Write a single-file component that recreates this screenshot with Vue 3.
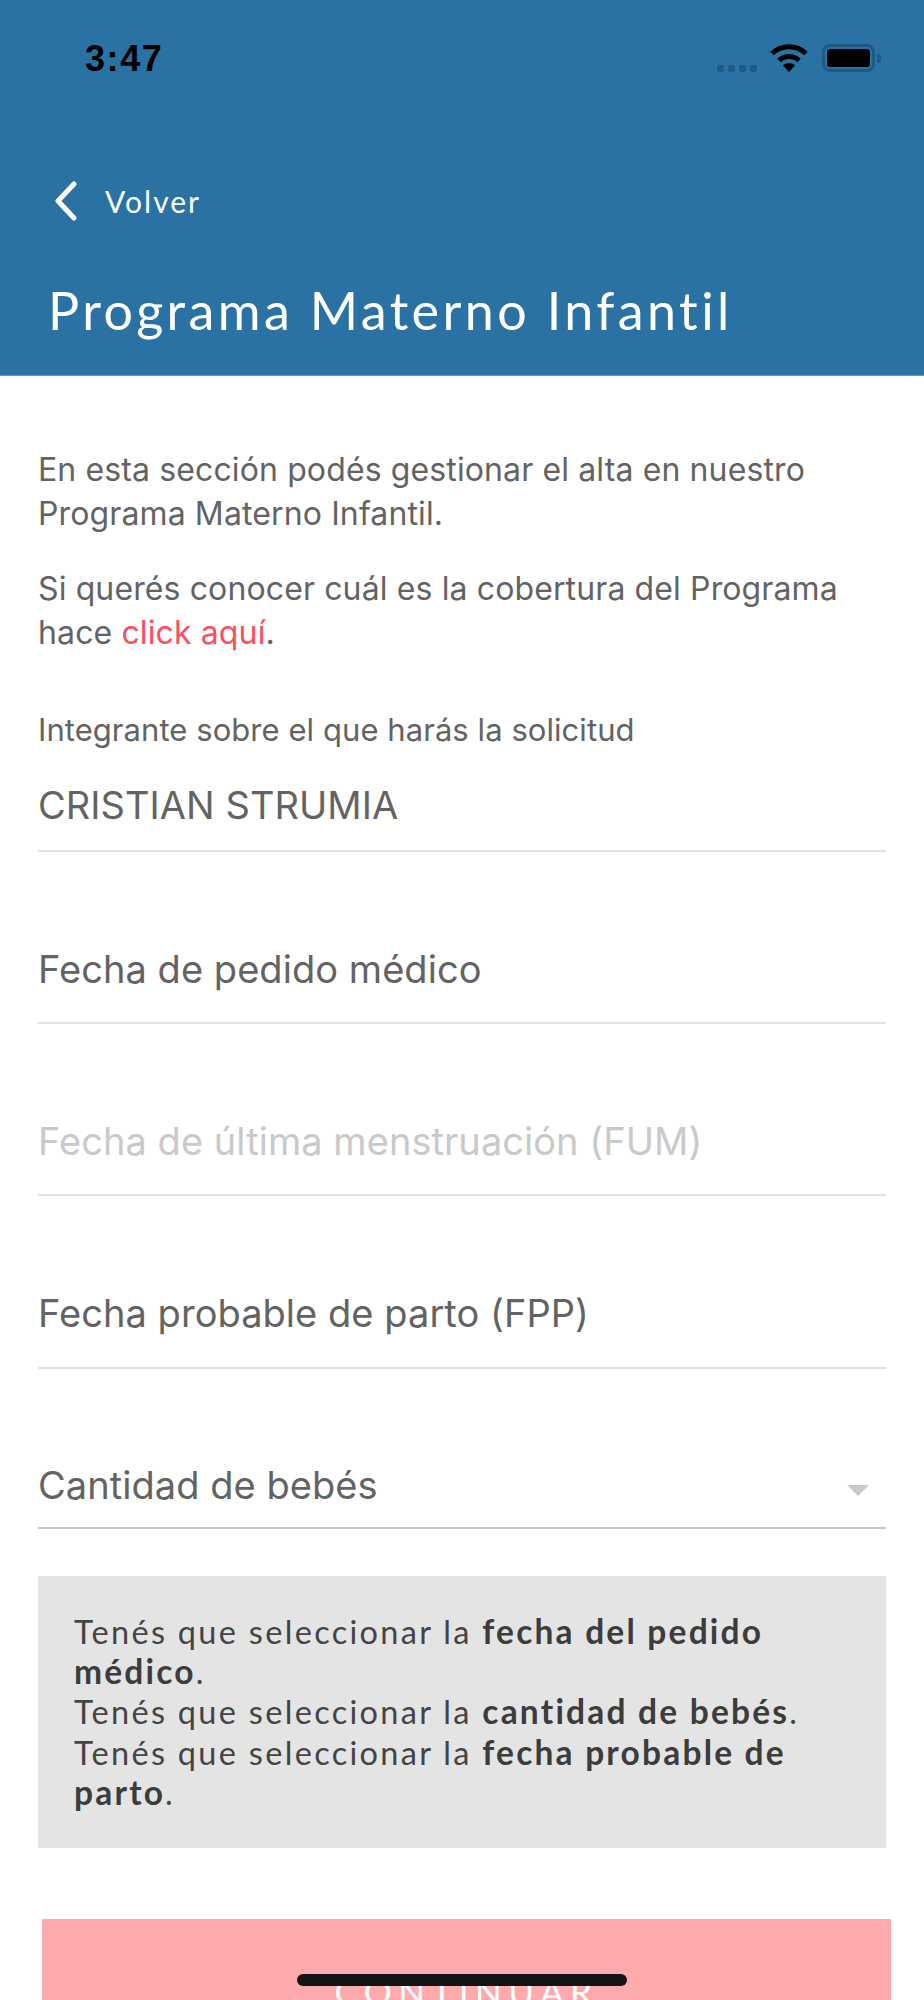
<template>
  <div class="screen">
    <header class="header">
      <div class="status">
        <span class="time">3:47</span>
        <div class="status-icons">
          <div class="signal"><i></i><i></i><i></i><i></i></div>
          <svg class="wifi" width="38" height="30" viewBox="0 0 38 30">
            <path d="M2 10.5C11.5 1.5 26.5 1.5 36 10.5" fill="none" stroke="#000" stroke-width="5" />
            <path d="M9 17.5C14.5 12.2 23.5 12.2 29 17.5" fill="none" stroke="#000" stroke-width="5" />
            <path d="M13 22.5C16.5 19.3 21.5 19.3 25 22.5L19 29Z" fill="#000" />
          </svg>
          <div class="battery"><div class="battery-fill"></div></div>
          <div class="battery-cap"></div>
        </div>
      </div>
      <div class="back">
        <svg width="26" height="40" viewBox="0 0 26 40">
          <path d="M21 3L5 20L21 37" fill="none" stroke="#fff" stroke-width="5" stroke-linecap="round" stroke-linejoin="round" />
        </svg>
        <span>Volver</span>
      </div>
      <h1 class="title">Programa Materno Infantil</h1>
    </header>

    <main class="content">
      <p class="intro">En esta sección podés gestionar el alta en nuestro<br />Programa Materno Infantil.</p>
      <p class="intro second">Si querés conocer cuál es la cobertura del Programa<br />hace <a class="link">click aquí</a>.</p>

      <label class="member-label">Integrante sobre el que harás la solicitud</label>
      <div class="field member">CRISTIAN STRUMIA</div>

      <div v-for="f in fields" :key="f.text" class="field" :class="{ disabled: f.disabled }">{{ f.text }}</div>

      <div class="field select">
        <span>Cantidad de bebés</span>
        <span class="arrow"></span>
      </div>

      <div class="notice">
        Tenés que seleccionar la <b>fecha del pedido</b><br /><b>médico</b>.<br />
        Tenés que seleccionar la <b>cantidad de bebés</b>.<br />
        Tenés que seleccionar la <b>fecha probable de</b><br /><b>parto</b>.
      </div>

      <button class="continue">CONTINUAR</button>
    </main>

    <div class="home-bar"></div>
  </div>
</template>

<script setup>
const fields = [
  { text: 'Fecha de pedido médico' },
  { text: 'Fecha de última menstruación (FUM)', disabled: true },
  { text: 'Fecha probable de parto (FPP)' },
]
</script>

<style>
html, body {
  margin: 0;
  background: #fff;
}
</style>

<style scoped>
.screen {
  position: relative;
  width: 924px;
  height: 2000px;
  overflow: hidden;
  background: #fff;
  font-family: Inter, "Liberation Sans", sans-serif;
  color: #636363;
}
.header {
  height: 376px;
  background: #2a72a3;
  border-bottom: 1px solid #5f9bc4;
  box-sizing: border-box;
  padding: 0 48px;
  color: #fff;
}
.status {
  display: flex;
  justify-content: space-between;
  align-items: center;
  height: 60px;
  padding-top: 28px;
  margin-left: 37px;
  margin-right: -5px;
}
.time {
  margin-top: 2px;
  font-family: "Liberation Sans", sans-serif;
  font-size: 36px;
  font-weight: 700;
  letter-spacing: 1.6px;
  color: #000;
}
.status-icons {
  display: flex;
  align-items: center;
}
.signal {
  display: flex;
  gap: 4px;
  margin-top: 21px;
  margin-right: 13px;
}
.signal i {
  width: 7px;
  height: 7px;
  border-radius: 2px;
  background: #1f5a83;
}
.wifi {
  margin-right: 14px;
}
.battery {
  box-sizing: border-box;
  width: 53px;
  height: 28px;
  border: 3px solid #1f5a83;
  border-radius: 8px;
  padding: 2px;
}
.battery-fill {
  height: 100%;
  background: #000;
  border-radius: 3px;
}
.battery-cap {
  width: 4px;
  height: 9px;
  margin-left: 2px;
  background: #1f5a83;
  border-radius: 0 3px 3px 0;
}
.back {
  display: flex;
  align-items: center;
  gap: 26px;
  margin-top: 93px;
  margin-left: 5px;
  font-family: Lato, sans-serif;
  font-size: 30px;
  letter-spacing: 2px;
}
.title {
  margin: 59px 0 0;
  font-family: Lato, sans-serif;
  font-size: 52px;
  font-weight: 400;
  letter-spacing: 3.4px;
  line-height: 60px;
}
.content {
  padding: 72px 38px 0;
}
.intro {
  margin: 0;
  font-size: 32px;
  line-height: 43.5px;
  letter-spacing: 0.12px;
}
.second {
  margin-top: 32px;
}
.link {
  color: #ff4d5e;
}
.member-label {
  display: block;
  margin-top: 56px;
  font-size: 31px;
  line-height: 40px;
  letter-spacing: 0.06px;
}
.field {
  box-sizing: border-box;
  height: 172.2px;
  padding-top: 93px;
  border-bottom: 2px solid #e0e0e0;
  font-size: 38px;
  line-height: 48px;
  letter-spacing: 0.05px;
}
.member {
  height: 102px;
  padding-top: 31px;
}
.disabled {
  color: #c9c9c9;
}
.select {
  display: flex;
  justify-content: space-between;
  height: 160.5px;
  padding-top: 92px;
  border-bottom-color: #c9c9c9;
}
.arrow {
  width: 0;
  height: 0;
  margin: 24px 17px 0 0;
  border-left: 11px solid transparent;
  border-right: 11px solid transparent;
  border-top: 11px solid #c8c8c8;
}
.notice {
  margin-top: 47px;
  padding: 36px;
  height: 272px;
  box-sizing: border-box;
  background: #e4e4e4;
  font-family: Lato, sans-serif;
  font-size: 32.5px;
  line-height: 40.2px;
  letter-spacing: 2.3px;
  color: #444;
  white-space: nowrap;
}
.notice b {
  font-weight: 700;
  font-size: 33.5px;
  letter-spacing: 2.2px;
  line-height: 1;
  color: #3c3c3c;
}
.continue {
  display: block;
  width: 849px;
  height: 144px;
  margin: 71px 0 0 4px;
  padding: 0;
  border: 0;
  background: #ffabae;
  color: #fff;
  font-family: Lato, sans-serif;
  font-size: 35px;
  letter-spacing: 6.5px;
  text-align: center;
}
.home-bar {
  position: absolute;
  left: 297px;
  top: 1974px;
  width: 330px;
  height: 12px;
  border-radius: 6px;
  background: #141414;
}
</style>
